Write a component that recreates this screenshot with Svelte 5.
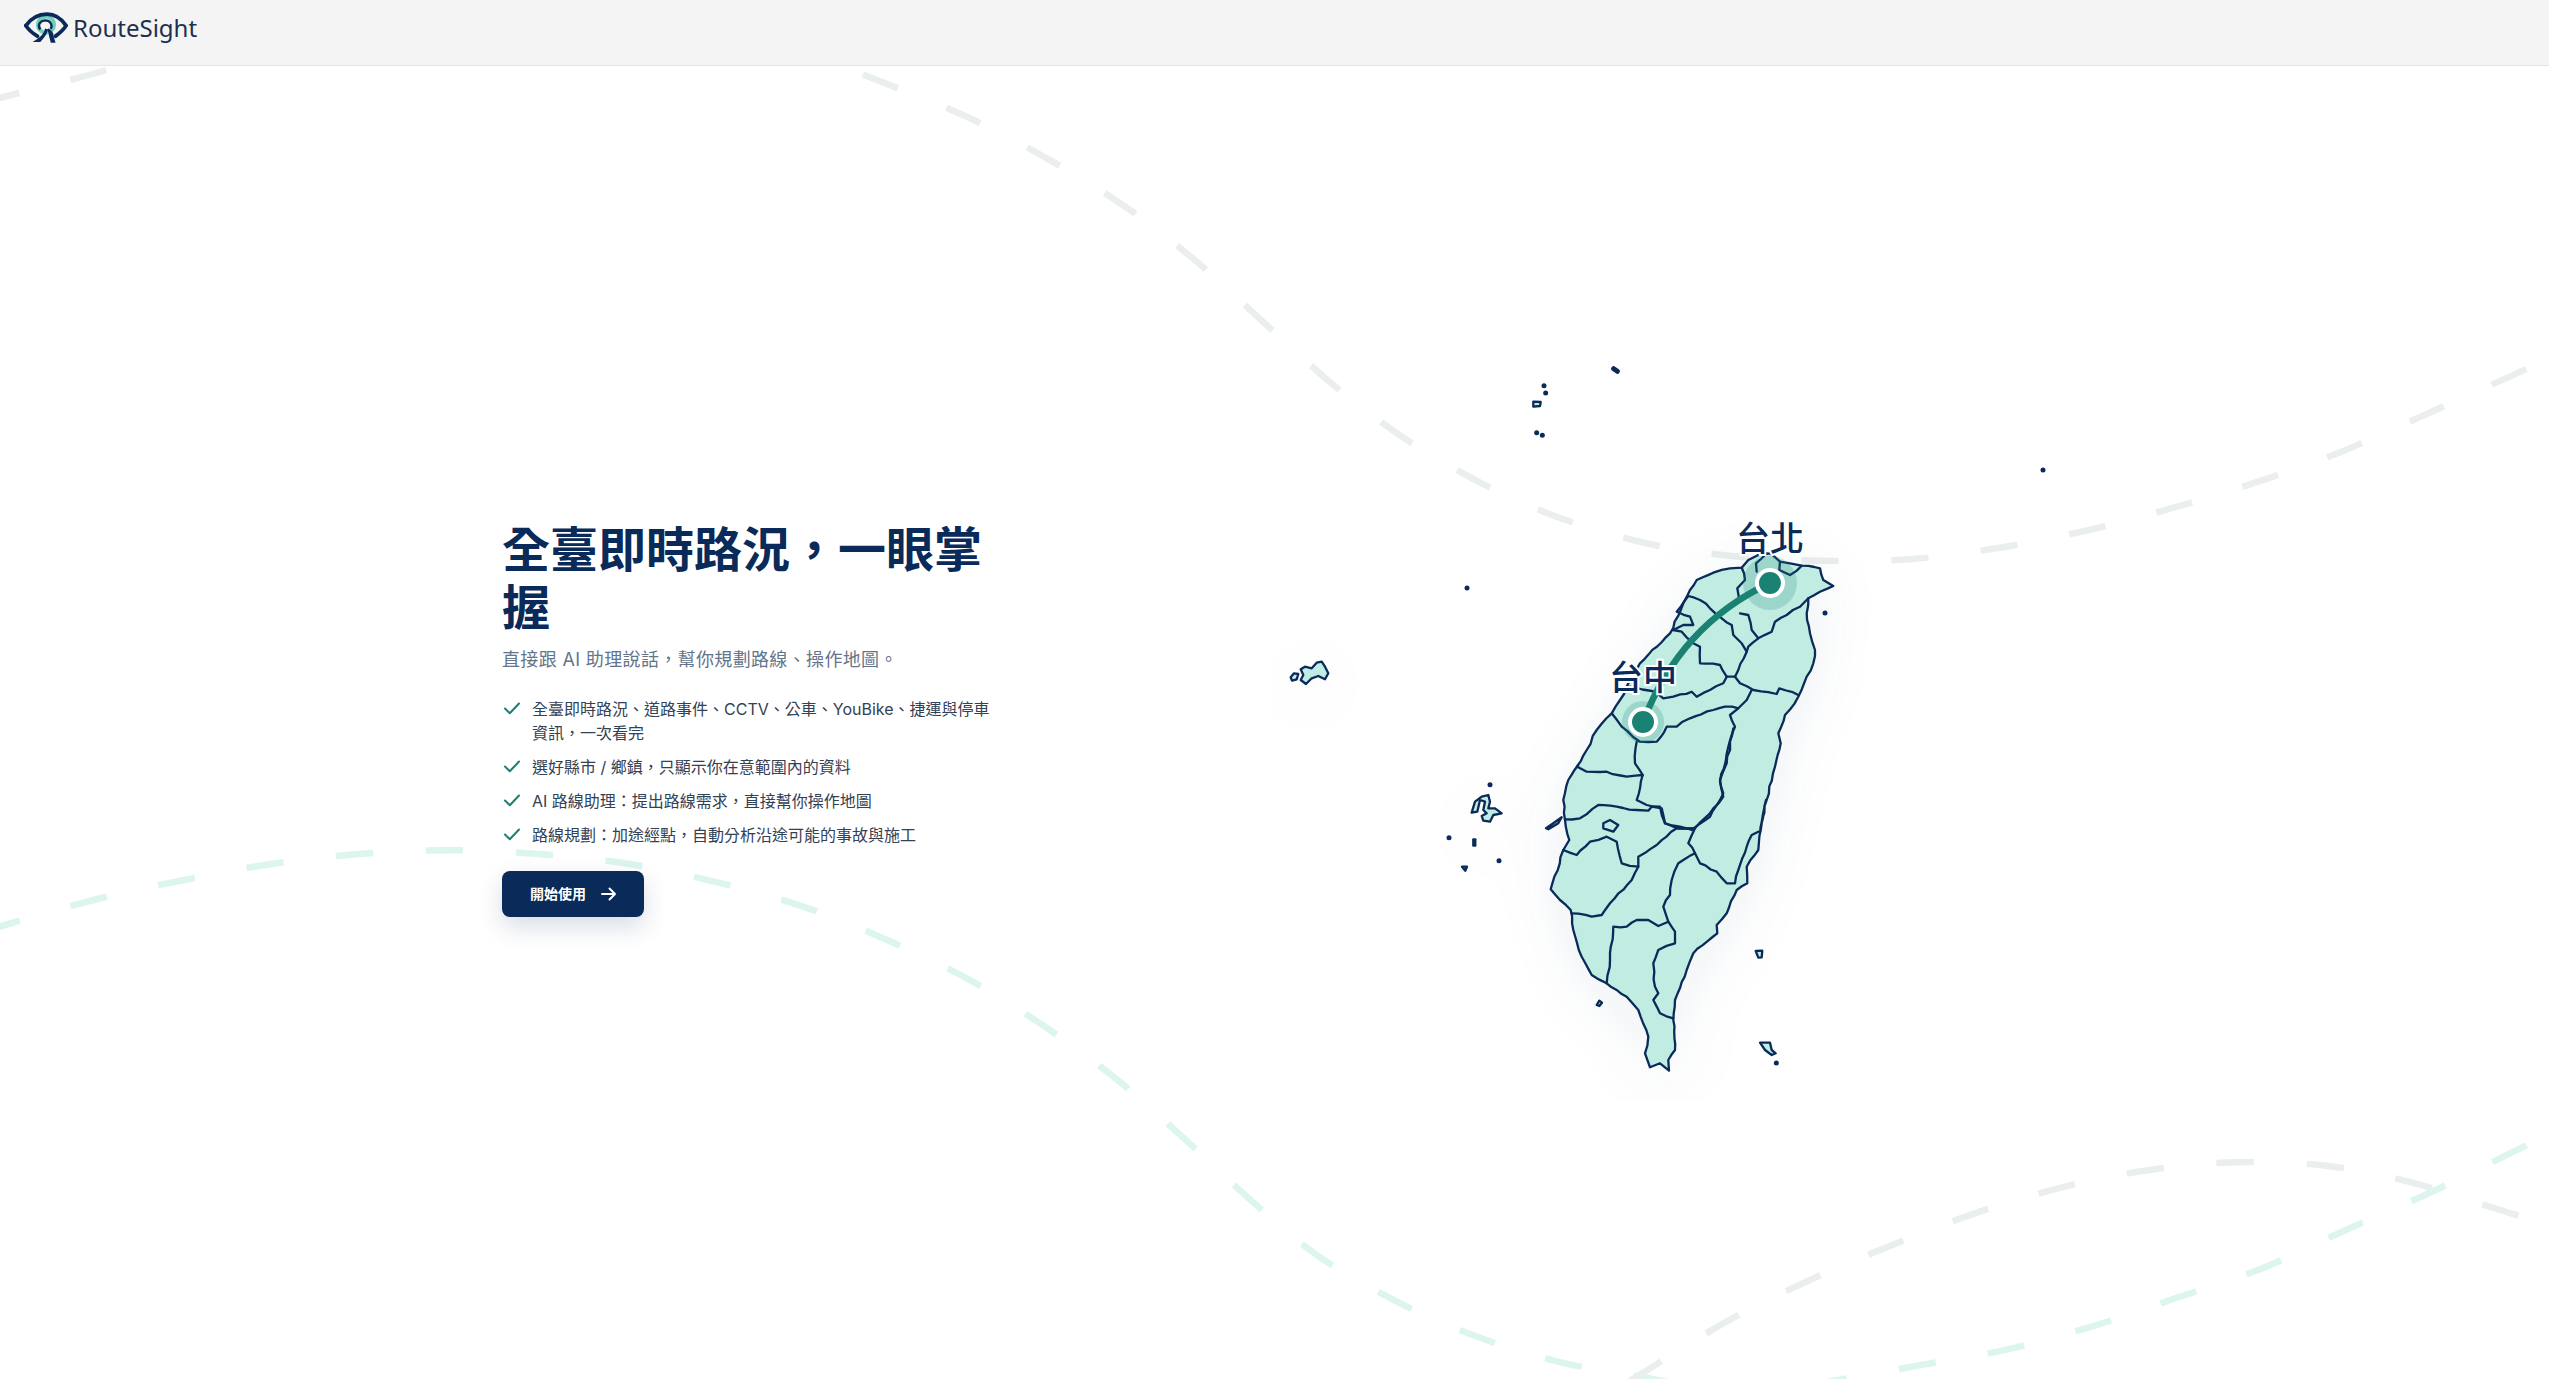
<script>
  const k = 2549 / 1568;
  const z = (ox, oy) => (pts) => pts.map(([x, y]) => [ox + x / 3, oy + y / 3]);
  const z3 = z(1500, 500), z4 = z(1520, 800), z6 = z(1520, 720), z7 = z(1540, 880), z8 = z(1280, 640), z9 = z(1510, 350), z10 = z(1440, 780);

  // Coastlines and county borders are irregular: split long segments and nudge the new vertices.
  const rough = (pts) => {
    const out = [];
    pts.forEach(([x, y], i) => {
      out.push([x, y]);
      const n = pts[i + 1];
      if (!n) return;
      const dist = Math.hypot(n[0] - x, n[1] - y);
      const steps = Math.floor(dist / 6);
      for (let s = 1; s < steps; s++) {
        const t = s / steps;
        const a = Math.sin((x + s) * 12.9898 + (y + s) * 78.233) * 43758.5453;
        const b = Math.sin((x - s) * 39.346 + (y + s) * 11.135) * 24634.6345;
        out.push([x + (n[0] - x) * t + (a - Math.floor(a) - 0.5) * 1.7, y + (n[1] - y) * t + (b - Math.floor(b) - 0.5) * 1.7]);
      }
    });
    return out;
  };
  const line = (pts, close = false) => 'M' + rough(close ? [...pts, pts[0]] : pts).map(([x, y]) => `${x.toFixed(1)} ${y.toFixed(1)}`).join('L') + (close ? 'Z' : '');

  const outline = [
    ...z3([[570,270],[590,240],[640,218],[690,205],[725,203],[745,180],[775,165],[810,160],[840,185],[870,190],[905,197],[960,205],[970,240],[1000,258],[960,275],[925,295],[920,340],[930,400],[945,450],[940,490],[920,530],[895,590],[855,645],[835,700],[842,730],[825,800],[800,900],[780,1000]]),
    ...z4([[738,0],[725,70],[715,150],[680,200],[682,250],[650,270],[620,340],[590,375],[592,400],[520,460],[500,510],[465,600],[460,660],[465,750],[445,780],[447,812],[420,790],[390,802],[375,760],[385,710],[355,630],[320,590],[260,550],[215,525],[185,470],[160,390],[152,330],[92,268],[130,150],[148,120],[135,60]]),
    ...z6([[130,240],[145,180],[175,135]]),
    ...z3([[230,800],[260,750],[290,690],[335,640],[360,600],[420,490],[510,400],[550,310]])
  ];
  const borders = [
    z3([[565,288],[600,300],[630,325],[665,355],[695,375],[700,405],[725,430],[740,455],[715,510],[705,530]]),
    z3([[725,203],[735,240],[712,265],[718,300]]),
    z3([[720,340],[745,345],[755,390],[775,415],[745,440],[740,455]]),
    z3([[775,415],[815,395],[825,365],[860,345],[900,320],[925,295]]),
    z3([[840,185],[838,210],[870,225],[905,197]]),
    z3([[800,160],[768,190],[770,215]]),
    z3([[705,530],[720,550],[760,570],[830,582],[838,565],[895,585]]),
    z3([[385,560],[465,575],[490,595],[520,590],[575,575],[590,590],[630,570],[670,550],[680,530],[705,530]]),
    z3([[520,390],[545,395],[580,430],[600,440],[600,490],[660,495],[680,530]]),
    z3([[565,288],[530,335],[570,350],[580,375],[550,375],[520,390]]),
    z3([[755,570],[740,600],[715,625],[675,620],[640,630],[570,655],[530,680],[500,680],[470,725],[420,725],[365,680],[335,640]]),
    z3([[410,725],[405,790],[428,825]]),
    z3([[232,800],[260,815],[320,815],[380,830],[428,825],[410,900],[440,915],[480,920],[495,970],[540,980],[575,990],[630,950],[670,880],[660,845],[685,740],[705,680],[690,645],[715,625]]),
    z6([[135,298],[180,295],[235,255],[290,260],[350,270],[385,272],[395,260],[425,265],[435,310],[480,325],[525,325],[505,370],[525,400],[540,430],[590,455],[620,490],[645,490],[655,450],[680,380],[695,345],[715,335]]),
    z6([[525,325],[580,265],[610,230],[600,180],[620,130],[640,25]]),
    z4([[130,150],[170,165],[210,125],[260,110],[290,125],[305,190],[355,200],[355,170],[410,135],[470,85],[520,85]]),
    z4([[355,200],[335,240],[270,310],[245,345],[215,350],[155,340]]),
    z4([[525,160],[475,190],[455,240],[450,285],[430,320],[445,365]]),
    z4([[260,550],[270,480],[280,380],[320,380],[350,360],[385,360],[415,378],[445,365],[465,395],[465,430],[415,450],[400,490],[405,560],[415,580],[400,600],[420,640],[460,655]])
  ];
  const islands = [
    z4([[250,70],[270,60],[295,75],[280,95],[250,85]]),
    z6([[78,325],[100,310],[125,292],[115,310],[85,328]]),
    z8([[62,88],[75,80],[95,85],[110,68],[125,65],[135,80],[145,100],[135,118],[115,108],[95,115],[78,132],[62,120],[70,105]]),
    z8([[32,112],[42,100],[55,102],[50,118],[36,122]]),
    z10([[95,98],[105,65],[125,50],[145,45],[150,65],[145,85],[165,85],[185,100],[160,105],[150,125],[130,122],[125,108],[140,100],[130,90],[135,65],[120,60],[112,95]]),
    z10([[100,178],[106,178],[106,197],[100,197]]),
    z10([[66,260],[81,260],[76,272]]),
    z7([[647,213],[667,212],[665,232],[655,233]]),
    z7([[660,488],[690,488],[695,510],[707,520],[695,525],[675,510]]),
    z7([[170,375],[178,362],[186,368],[178,378]]),
    z9([[70,155],[92,156],[90,168],[70,170]])
  ];
  const specks = [
    ...z10([[150,14],[27,173],[177,242]]), ...z9([[102,107],[107,129],[80,248],[97,256]]),
    ...z7([[709,549]]), [1467,588], [2043,470], [1825,613]
  ];
  const dongyin = z9([[311,56],[322,64]]);

  const smooth = (p) => {
    let d = `M${p[0][0].toFixed(1)} ${p[0][1].toFixed(1)}`;
    for (let i = 0; i < p.length - 1; i++) {
      const a = p[Math.max(i - 1, 0)], b = p[i], c = p[i + 1], e = p[Math.min(i + 2, p.length - 1)];
      d += `C${(b[0] + (c[0] - a[0]) / 6).toFixed(1)} ${(b[1] + (c[1] - a[1]) / 6).toFixed(1)} ${(c[0] - (e[0] - b[0]) / 6).toFixed(1)} ${(c[1] - (e[1] - b[1]) / 6).toFixed(1)} ${c[0].toFixed(1)} ${c[1].toFixed(1)}`;
    }
    return d;
  };
  const period = 89, dash = 37;
  const half = (a, b) => [a[0] + (a[0] - b[0]) / 2, a[1] + (a[1] - b[1]) / 2];
  const mk = (pts, cls) => {
    const p = pts.map(([x, y]) => [x * k, y * k]);
    const ext = [half(p[0], p[1]), ...p, half(p[p.length - 1], p[p.length - 2])];
    return { d: smooth(ext), len: (p.length - 1) * period + period, cls };
  };
  const curves = [
    mk([[1,60],[55,46],[110,30],[165,17],[220,8],[275,4],[330,5],[385,10],[430,17],[482,28],[544,51],[595,72],[645,98],[692,127],[735,160],[777,198],[817,234],[860,267],[907,295],[958,318],[1012,334],[1065,342],[1120,345],[1175,344],[1230,337],[1285,326],[1338,312],[1390,296],[1440,278],[1492,255],[1543,232]], 'gray'),
    mk([[3,569],[60,553],[115,541],[170,531],[225,525],[280,523],[340,526],[390,532],[442,543],[495,558],[545,578],[595,602],[642,631],[687,664],[728,700],[768,737],[810,772],[858,800],[908,822],[960,838],[1015,848],[1070,860]], 'mint'),
    mk([[1013,843],[1062,813],[1112,788],[1161,767],[1213,747],[1266,731],[1320,720],[1375,715],[1430,717],[1482,727],[1537,744]], 'gray'),
    mk([[1125,850],[1180,840],[1235,830],[1290,815],[1340,798],[1392,780],[1440,758],[1492,735],[1543,710]], 'mint')
  ];

  const features = [
    '全臺即時路況、道路事件、CCTV、公車、YouBike、捷運與停車資訊，一次看完',
    '選好縣市 / 鄉鎮，只顯示你在意範圍內的資料',
    'AI 路線助理：提出路線需求，直接幫你操作地圖',
    '路線規劃：加途經點，自動分析沿途可能的事故與施工'
  ];
</script>

<div class="page">
  <svg class="lines" viewBox="0 0 2549 1379" aria-hidden="true">
    {#each curves as c}
      <path class={c.cls} d={c.d} pathLength={c.len} stroke-dasharray="{dash} {period - dash}" stroke-dashoffset={dash / 2 - period / 2} />
    {/each}
  </svg>

  <header class="top">
    <a class="brand" href="#top">
      <svg class="logo" viewBox="0 0 46 34" aria-hidden="true">
        <circle cx="23" cy="13" r="8.5" class="l-mint" />
        <path class="l-navy" d="M2 14C9 4 17 2 24 2s14 3 20 12c-3 5-7 8-11 11" />
        <path class="l-navy" d="M2 14c3 5 7 8 12 11" />
        <path class="l-thin" d="M17 18c-3-4-1-9 5-9.500 6 0 8 5 6 9" />
        <path class="l-road" d="M22 17c-1 6-6 10-13 14h8c4-4 7-8 8-13z" />
        <path class="l-road" d="M26 17c3 3 5 4 5 8l2 7h-5l-2-8c0-2-1-4-2-6z" />
      </svg>
      <span>RouteSight</span>
    </a>
  </header>

  <main class="hero">
    <section class="copy">
      <h1>全臺即時路況，一眼掌握</h1>
      <p class="sub">直接跟 AI 助理說話，幫你規劃路線、操作地圖。</p>
      <ul>
        {#each features as f}
          <li>
            <svg class="check" viewBox="0 0 20 20" aria-hidden="true"><path d="M3 10.500l4.800 4.800L17 5.500" /></svg>
            <span>{f}</span>
          </li>
        {/each}
      </ul>
      <button type="button">
        開始使用
        <svg class="arrow" viewBox="0 0 18 18" aria-hidden="true"><path d="M2 9h13M9.500 3.500L15 9l-5.500 5.500" /></svg>
      </button>
    </section>

    <svg class="map" viewBox="1270 340 800 760" role="img" aria-label="臺灣地圖">
      <g class="land">
        <path class="shape" d={line(outline, true)} />
        {#each islands as i}<path class="shape" d={line(i, true)} />{/each}
        {#each specks as s}<circle class="speck" cx={s[0]} cy={s[1]} r="2.500" />{/each}
        <path class="dongyin" d={`M${dongyin[0][0]} ${dongyin[0][1]}L${dongyin[1][0]} ${dongyin[1][1]}`} />
        {#each borders as b}<path class="border" d={line(b)} />{/each}
      </g>
      <circle class="halo" cx="1770" cy="583" r="27" />
      <circle class="halo" cx="1643" cy="722" r="21" />
      <path class="route" d="M1770 583Q1680 625 1643 722" />
      <circle class="dot" cx="1770" cy="583" r="13" />
      <circle class="dot" cx="1643" cy="722" r="13" />
      <text x="1770" y="551">台北</text>
      <text x="1643" y="690">台中</text>
    </svg>
  </main>
</div>

<style>
  :global(body) { margin: 0; background: #fff; }
  .page {
    position: relative;
    width: 2549px;
    height: 1379px;
    overflow: hidden;
    font-family: Inter, "Noto Sans CJK TC", sans-serif;
  }
  .lines { position: absolute; inset: 0; width: 2549px; height: 1379px; }
  .lines path { fill: none; stroke-width: 6.500; }
  .lines .gray { stroke: #ebeeee; }
  .lines .mint { stroke: #dcf5ee; }

  .top {
    position: relative;
    height: 65px;
    display: flex;
    align-items: flex-start;
    padding-left: 24px;
    background: #f4f4f5;
    border-bottom: 1px solid #e4e4e7;
  }
  .brand {
    display: flex;
    align-items: center;
    gap: 5px;
    margin-top: 10px;
    color: #1c2f4f;
    text-decoration: none;
    font: 400 24px/36px "Noto Sans", sans-serif;
  }
  .logo { width: 44px; height: 33px; }
  .l-mint { fill: none; stroke: #6fd0b8; stroke-width: 4; }
  .l-navy { fill: none; stroke: #0a2a5a; stroke-width: 4; stroke-linecap: round; }
  .l-thin { fill: none; stroke: #0a2a5a; stroke-width: 2.500; }
  .l-road { fill: #0a2a5a; }

  .hero {
    position: relative;
    height: 1313px;
    display: flex;
    align-items: center;
    padding-left: 502px;
  }
  .copy { width: 490px; flex: none; margin-top: -7.500px; }
  h1 {
    margin: 0;
    font-size: 48px;
    line-height: 57.600px;
    font-weight: 700;
    color: #0a2a5a;
  }
  .sub {
    margin: 10px 0 0;
    font-size: 18px;
    line-height: 28px;
    letter-spacing: 0.35px;
    color: #64748b;
  }
  ul {
    list-style: none;
    margin: 22.500px 0 0;
    padding: 0;
    display: flex;
    flex-direction: column;
    gap: 10px;
  }
  li {
    display: flex;
    gap: 10px;
    font-size: 16px;
    line-height: 24px;
    color: #334155;
  }
  .check { width: 20px; height: 20px; flex: none; margin-top: 1px; }
  .check path { fill: none; stroke: #1a8272; stroke-width: 2; stroke-linecap: round; stroke-linejoin: round; }
  button {
    display: inline-flex;
    align-items: center;
    gap: 14px;
    margin-top: 24px;
    height: 46px;
    padding: 0 26px 0 28px;
    border: 0;
    border-radius: 8px;
    background: #0a2a5a;
    color: #fff;
    font: 600 14px/20px Inter, "Noto Sans CJK TC", sans-serif;
    box-shadow: 0 10px 24px rgba(10, 42, 90, 0.16);
  }
  .arrow { width: 18px; height: 18px; }
  .arrow path { fill: none; stroke: #fff; stroke-width: 2; stroke-linecap: round; stroke-linejoin: round; }

  .map { width: 800px; height: 760px; flex: none; margin-left: 278px; margin-top: -6px; }
  .land { filter: drop-shadow(0 12px 30px rgba(10, 42, 90, 0.07)); }
  .shape { fill: #c1ece2; stroke: #0a2a5a; stroke-width: 2.300; stroke-linejoin: round; }
  .border { fill: none; stroke: #0a2a5a; stroke-width: 2.300; stroke-linejoin: round; stroke-linecap: round; }
  .speck { fill: #0a2a5a; }
  .dongyin { fill: none; stroke: #0a2a5a; stroke-width: 5; stroke-linecap: round; }
  .halo { fill: #1a8272; opacity: 0.22; }
  .route { fill: none; stroke: #1a8272; stroke-width: 6.500; stroke-linecap: round; }
  .dot { fill: #1a8272; stroke: #fff; stroke-width: 4; }
  text {
    font: 500 34px "Noto Sans CJK TC", sans-serif;
    fill: #0a2a5a;
    text-anchor: middle;
    stroke: #fff;
    stroke-width: 4px;
    paint-order: stroke;
  }
</style>
